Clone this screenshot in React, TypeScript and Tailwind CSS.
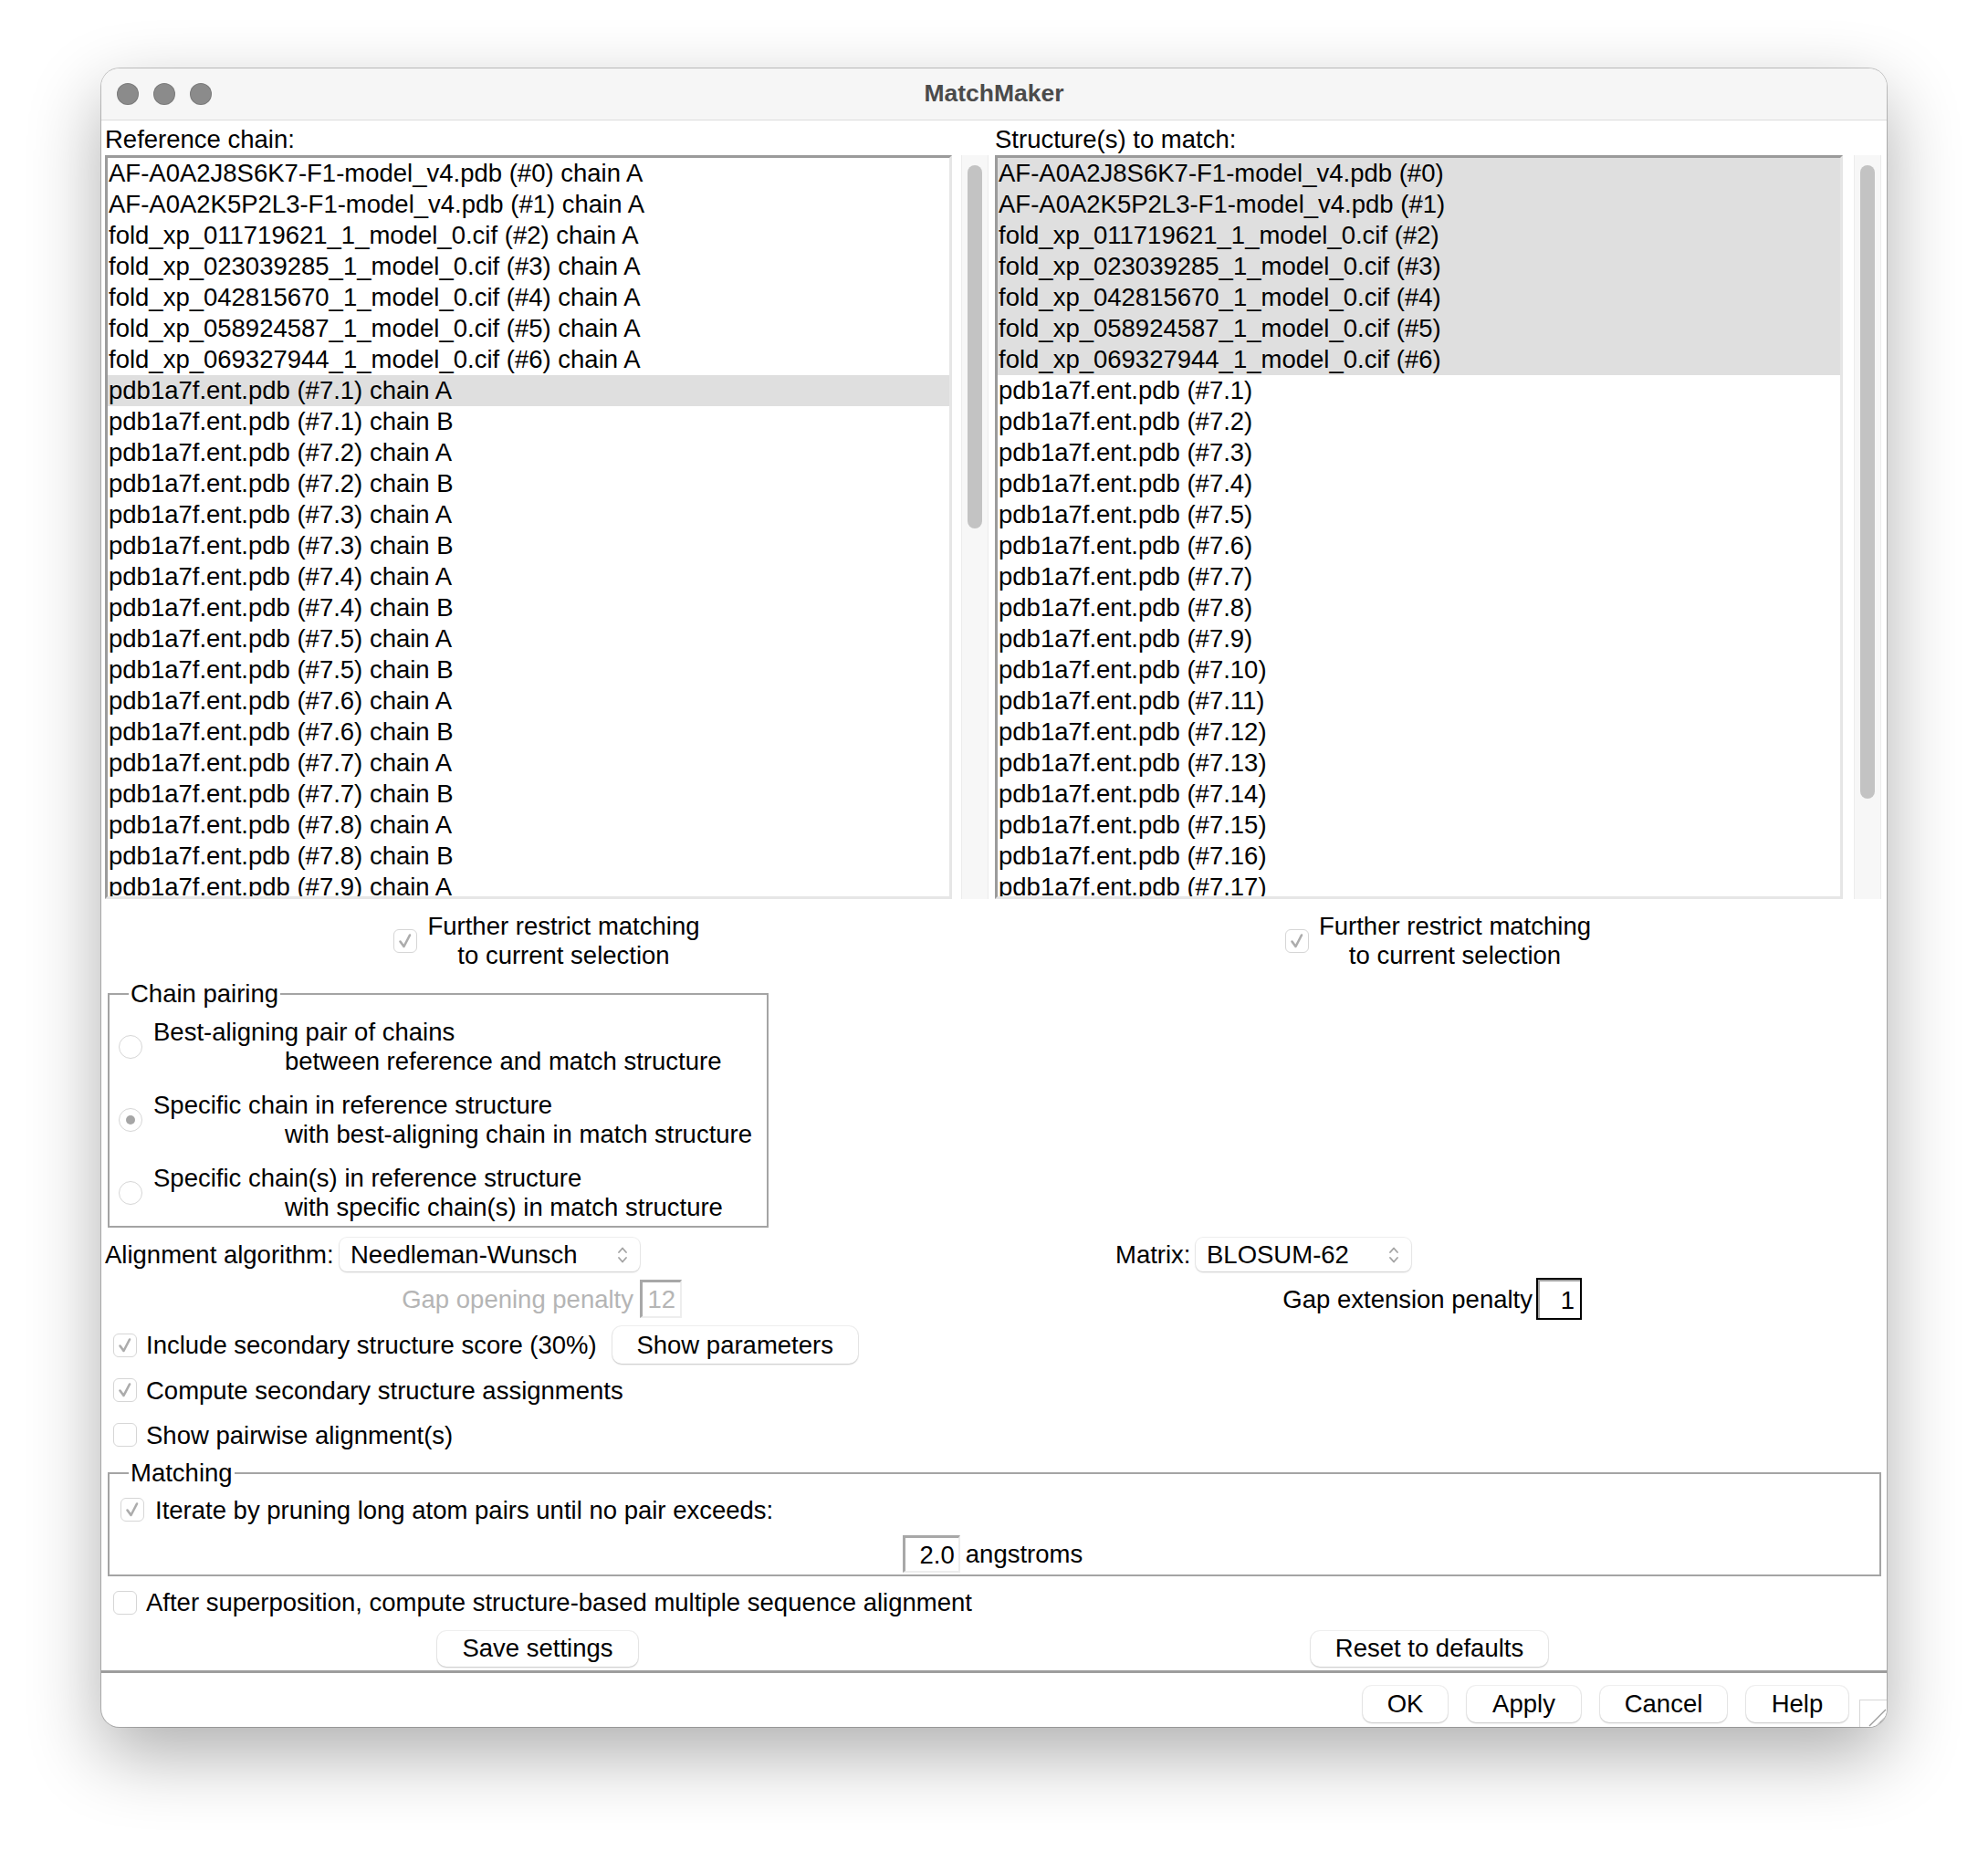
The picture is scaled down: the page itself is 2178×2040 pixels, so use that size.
import React from 'react';

const leftRows = [
  'AF-A0A2J8S6K7-F1-model_v4.pdb (#0) chain A',
  'AF-A0A2K5P2L3-F1-model_v4.pdb (#1) chain A',
  'fold_xp_011719621_1_model_0.cif (#2) chain A',
  'fold_xp_023039285_1_model_0.cif (#3) chain A',
  'fold_xp_042815670_1_model_0.cif (#4) chain A',
  'fold_xp_058924587_1_model_0.cif (#5) chain A',
  'fold_xp_069327944_1_model_0.cif (#6) chain A',
  'pdb1a7f.ent.pdb (#7.1) chain A',
  'pdb1a7f.ent.pdb (#7.1) chain B',
  'pdb1a7f.ent.pdb (#7.2) chain A',
  'pdb1a7f.ent.pdb (#7.2) chain B',
  'pdb1a7f.ent.pdb (#7.3) chain A',
  'pdb1a7f.ent.pdb (#7.3) chain B',
  'pdb1a7f.ent.pdb (#7.4) chain A',
  'pdb1a7f.ent.pdb (#7.4) chain B',
  'pdb1a7f.ent.pdb (#7.5) chain A',
  'pdb1a7f.ent.pdb (#7.5) chain B',
  'pdb1a7f.ent.pdb (#7.6) chain A',
  'pdb1a7f.ent.pdb (#7.6) chain B',
  'pdb1a7f.ent.pdb (#7.7) chain A',
  'pdb1a7f.ent.pdb (#7.7) chain B',
  'pdb1a7f.ent.pdb (#7.8) chain A',
  'pdb1a7f.ent.pdb (#7.8) chain B',
  'pdb1a7f.ent.pdb (#7.9) chain A',
];

const rightRows = [
  'AF-A0A2J8S6K7-F1-model_v4.pdb (#0)',
  'AF-A0A2K5P2L3-F1-model_v4.pdb (#1)',
  'fold_xp_011719621_1_model_0.cif (#2)',
  'fold_xp_023039285_1_model_0.cif (#3)',
  'fold_xp_042815670_1_model_0.cif (#4)',
  'fold_xp_058924587_1_model_0.cif (#5)',
  'fold_xp_069327944_1_model_0.cif (#6)',
  ...Array.from({ length: 17 }, (_, i) => `pdb1a7f.ent.pdb (#7.${i + 1})`),
];

function Check({ checked = false }: { checked?: boolean }) {
  return (
    <span className="flex h-[26px] w-[26px] shrink-0 items-center justify-center rounded-[6px] border border-[#d6d6d6] bg-white">
      {checked && (
        <svg width="20" height="20" viewBox="0 0 20 20" fill="none">
          <path d="M4.5 10.5 L8.5 16 L15 3.5" stroke="#acacac" strokeWidth="2.6" strokeLinecap="round" strokeLinejoin="round" />
        </svg>
      )}
    </span>
  );
}

function Radio({ selected = false }: { selected?: boolean }) {
  return (
    <span className="flex h-[26px] w-[26px] shrink-0 items-center justify-center rounded-full border border-[#d6d6d6] bg-white">
      {selected && <span className="h-[10px] w-[10px] rounded-full bg-[#a6a6a6]" />}
    </span>
  );
}

function Button({ children, className = '' }: { children: React.ReactNode; className?: string }) {
  return (
    <div
      className={`flex items-center justify-center rounded-[10px] bg-white shadow-[0_0_0_1px_rgba(0,0,0,0.06),0_1px_2px_rgba(0,0,0,0.18)] ${className}`}
    >
      {children}
    </div>
  );
}

function Select({ value, className = '' }: { value: string; className?: string }) {
  return (
    <div
      className={`flex h-[37px] items-center justify-between rounded-[8px] bg-white pl-[12px] pr-[12px] shadow-[0_0_0_1px_rgba(0,0,0,0.06),0_1px_2px_rgba(0,0,0,0.16)] ${className}`}
    >
      <span>{value}</span>
      <svg width="14" height="24" viewBox="0 0 14 24" fill="none">
        <path d="M3 9 L7 4.5 L11 9" stroke="#a3a3a3" strokeWidth="1.8" strokeLinecap="round" strokeLinejoin="round" />
        <path d="M3 15 L7 19.5 L11 15" stroke="#a3a3a3" strokeWidth="1.8" strokeLinecap="round" strokeLinejoin="round" />
      </svg>
    </div>
  );
}

function ListBox({ rows, isSelected, className = '' }: { rows: string[]; isSelected: (i: number) => boolean; className?: string }) {
  return (
    <div
      className={`h-[815px] overflow-hidden border-t-[3px] border-l-[3px] border-r-[3px] border-b-[3px] border-t-[#9b9b9b] border-l-[#9b9b9b] border-r-[#e6e6e6] border-b-[#e6e6e6] bg-white ${className}`}
    >
      {rows.map((r, i) => (
        <div key={i} className={`h-[34px] whitespace-nowrap pl-[1px] leading-[34px] ${isSelected(i) ? 'bg-[#dfdfdf]' : ''}`}>
          {r}
        </div>
      ))}
    </div>
  );
}

function Scrollbar({ thumb }: { thumb: number }) {
  return (
    <div className="h-[815px] w-[30px] border-x border-[#ececec] bg-[#f7f7f7] pt-[11px]">
      <div className="mx-auto w-[16px] rounded-full bg-[#c3c3c3]" style={{ height: thumb }} />
    </div>
  );
}

function Restrict() {
  return (
    <div className="mt-[14px] flex items-center justify-center gap-[11px]">
      <Check checked />
      <div className="text-center leading-[32px]">
        <div>Further restrict matching</div>
        <div>to current selection</div>
      </div>
    </div>
  );
}

export default function App() {
  return (
    <div
      className="min-h-screen bg-white pl-[111px] pt-[75px] text-[27.5px] text-black"
      style={{ fontFamily: '"Liberation Sans", Arial, sans-serif' }}
    >
      <div className="relative flex h-[1817px] w-[1956px] flex-col overflow-hidden rounded-[20px] bg-white shadow-[0_0_0_1px_rgba(0,0,0,0.22),0_30px_80px_rgba(0,0,0,0.32)]">
        {/* Title bar */}
        <div className="relative flex h-[57px] shrink-0 items-center border-b border-[#dcdcdc] bg-[#f6f6f6]">
          <div className="flex gap-[16px] pl-[17px]">
            <span className="h-[24px] w-[24px] rounded-full bg-[#8b8b8b] shadow-[inset_0_0_0_1px_rgba(0,0,0,0.12)]" />
            <span className="h-[24px] w-[24px] rounded-full bg-[#8b8b8b] shadow-[inset_0_0_0_1px_rgba(0,0,0,0.12)]" />
            <span className="h-[24px] w-[24px] rounded-full bg-[#8b8b8b] shadow-[inset_0_0_0_1px_rgba(0,0,0,0.12)]" />
          </div>
          <div className="absolute inset-x-0 text-center text-[26.5px] font-bold text-[#4b4b4b]">MatchMaker</div>
        </div>

        {/* Lists */}
        <div className="flex pl-[4px] pt-[4px]">
          <div className="w-[968px]">
            <div className="h-[34px] leading-[34px]">Reference chain:</div>
            <div className="flex">
              <ListBox rows={leftRows} isSelected={(i) => i === 7} className="w-[928px]" />
              <div className="ml-[10px]">
                <Scrollbar thumb={398} />
              </div>
            </div>
            <Restrict />
          </div>
          <div className="ml-[7px] w-[971px]">
            <div className="h-[34px] leading-[34px]">Structure(s) to match:</div>
            <div className="flex">
              <ListBox rows={rightRows} isSelected={(i) => i < 7} className="w-[930px]" />
              <div className="ml-[12px]">
                <Scrollbar thumb={694} />
              </div>
            </div>
            <Restrict />
          </div>
        </div>

        {/* Chain pairing */}
        <fieldset className="ml-[7px] mt-[9px] w-[724px] border-2 border-[#a4a4a4] pb-[4px] pl-[10px]">
          <legend className="ml-[11px] px-[2px] leading-[34px]">Chain pairing</legend>
          <div className="mt-[9px] flex flex-col gap-[16px] leading-[32px]">
            {[
              ['Best-aligning pair of chains', 'between reference and match structure', false],
              ['Specific chain in reference structure', 'with best-aligning chain in match structure', true],
              ['Specific chain(s) in reference structure', 'with specific chain(s) in match structure', false],
            ].map(([a, b, sel], i) => (
              <div key={i} className="flex items-center gap-[12px]">
                <Radio selected={sel as boolean} />
                <div className="whitespace-nowrap">
                  <div>{a as string}</div>
                  <div className="pl-[144px]">{b as string}</div>
                </div>
              </div>
            ))}
          </div>
        </fieldset>

        {/* Alignment algorithm / Matrix */}
        <div className="mt-[9px] flex items-center pl-[4px]">
          <div className="flex w-[1107px] items-center">
            <span className="w-[257px]">Alignment algorithm:</span>
            <Select value="Needleman-Wunsch" className="w-[329px]" />
          </div>
          <span className="w-[88px]">Matrix:</span>
          <Select value="BLOSUM-62" className="w-[236px]" />
        </div>

        {/* Gap penalties */}
        <div className="mt-[5px] flex h-[46px] items-center pl-[4px]">
          <span className="w-[586px] pr-[7px] text-right text-[#b5b5b5]">Gap opening penalty</span>
          <div className="flex h-[42px] w-[46px] items-center justify-end border-t-[3px] border-l-[3px] border-b-2 border-r-2 border-t-[#a8a8a8] border-l-[#a8a8a8] border-b-[#ededed] border-r-[#ededed] pr-[5px] text-[#b5b5b5]">
            12
          </div>
          <span className="w-[936px] pr-[4px] text-right">Gap extension penalty</span>
          <div className="h-[46px] w-[50px] border-2 border-black">
            <div className="flex h-full items-center justify-end border-t-2 border-l-2 border-[#a3a3a3] pr-[6px]">1</div>
          </div>
        </div>

        {/* Checkbox options */}
        <div className="mt-[7px] flex h-[41px] items-center pl-[13px]">
          <Check checked />
          <span className="ml-[10px]">Include secondary structure score (30%)</span>
          <Button className="ml-[17px] h-[41px] w-[269px]">Show parameters</Button>
        </div>
        <div className="mt-[12px] flex h-[34px] items-center pl-[13px]">
          <Check checked />
          <span className="ml-[10px]">Compute secondary structure assignments</span>
        </div>
        <div className="mt-[15px] flex h-[34px] items-center pl-[13px]">
          <Check />
          <span className="ml-[10px]">Show pairwise alignment(s)</span>
        </div>

        {/* Matching */}
        <fieldset className="ml-[7px] mt-[8px] w-[1943px] border-2 border-[#a4a4a4] pb-[1px]">
          <legend className="ml-[21px] px-[2px] leading-[34px]">Matching</legend>
          <div className="mt-[6px] flex h-[34px] items-center pl-[12px]">
            <Check checked />
            <span className="ml-[12px]">Iterate by pruning long atom pairs until no pair exceeds:</span>
          </div>
          <div className="mt-[11px] flex items-center justify-center pr-[4px]">
            <div className="flex h-[41px] w-[63px] items-center justify-end border-t-[3px] border-l-[3px] border-b-2 border-r-2 border-t-[#a8a8a8] border-l-[#a8a8a8] border-b-[#ededed] border-r-[#ededed] pr-[4px]">
              2.0
            </div>
            <span className="ml-[6px]">angstroms</span>
          </div>
        </fieldset>

        <div className="mt-[12px] flex h-[34px] items-center pl-[13px]">
          <Check />
          <span className="ml-[10px]">After superposition, compute structure-based multiple sequence alignment</span>
        </div>

        {/* Save / Reset */}
        <div className="mt-[14px] flex">
          <Button className="ml-[368px] h-[39px] w-[220px]">Save settings</Button>
          <Button className="ml-[737px] h-[39px] w-[260px]">Reset to defaults</Button>
        </div>

        <div className="mt-[4px] border-t-[3px] border-[#9d9d9d]" />

        {/* Dialog buttons */}
        <div className="mt-[14px] flex justify-end gap-[21px] pr-[42px]">
          <Button className="h-[40px] w-[93px]">OK</Button>
          <Button className="h-[40px] w-[125px]">Apply</Button>
          <Button className="h-[40px] w-[139px]">Cancel</Button>
          <Button className="h-[40px] w-[112px]">Help</Button>
        </div>

        {/* Resize grip */}
        <div className="absolute bottom-0 right-0 h-[30px] w-[30px] border-l border-t border-[#d6d6d6] bg-white">
          <svg width="30" height="30" viewBox="0 0 30 30" fill="none">
            <path d="M10 28 L28 10" stroke="#9a9a9a" strokeWidth="1.2" />
            <path d="M18 28 L28 18" stroke="#9a9a9a" strokeWidth="1.2" />
          </svg>
        </div>
      </div>
    </div>
  );
}
